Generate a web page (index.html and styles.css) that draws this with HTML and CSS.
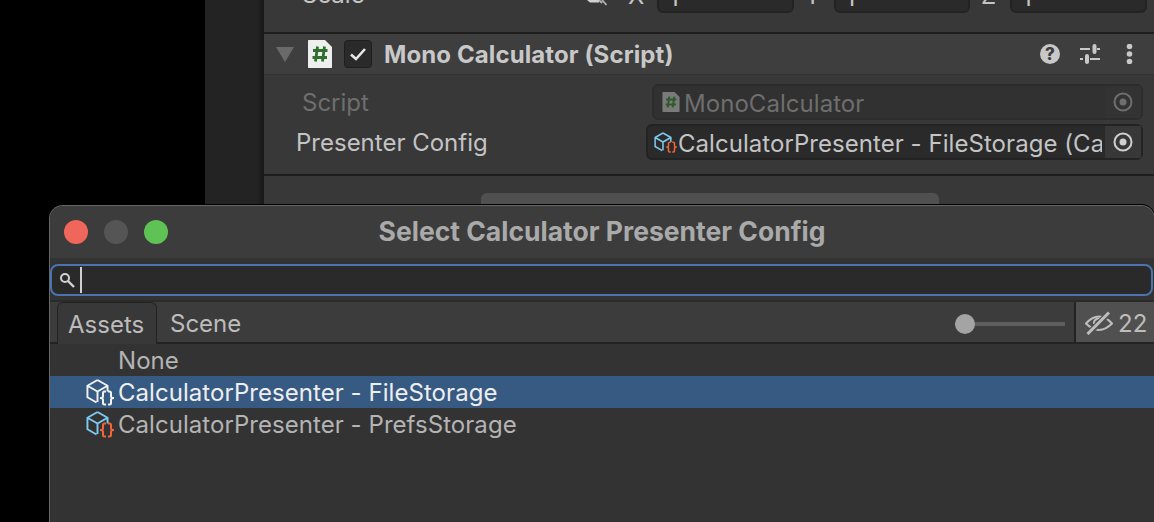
FILE: index.html
```html
<!DOCTYPE html>
<html lang="en">
<head>
    <meta charset="UTF-8">
    <title>Select Calculator Presenter Config</title>
    <link rel="stylesheet" href="styles.css">
</head>
<body>
    <svg class="defs" width="0" height="0">
        <symbol id="cube" viewBox="0 0 24 26">
            <path d="M12 1 22.500 7V13M12 1 1.500 7V19L11 24.500M1.500 7 12 13M22.500 7 12 13M12 13V24" fill="none" stroke="currentColor" stroke-width="2" stroke-linejoin="round"/>
        </symbol>
        <symbol id="braces" viewBox="0 0 14 16">
            <path d="M6 1.500H4.500C3.500 1.500 3 2 3 3V6.500C3 7.500 2.500 8 0 8 2.500 8 3 8.500 3 9.500V13C3 14 3.500 14.500 4.500 14.500H6M8 1.500H9.500C10.500 1.500 11 2 11 3V6.500C11 7.500 11.500 8 14 8 11.500 8 11 8.500 11 9.500V13C11 14 10.500 14.500 9.500 14.500H8M0 8H3M11 8H14" fill="none" stroke="currentColor" stroke-width="2"/>
        </symbol>
        <symbol id="target" viewBox="0 0 20 20">
            <circle cx="10" cy="10" r="8.500" fill="none" stroke="currentColor" stroke-width="2"/>
            <circle cx="10" cy="10" r="3.500" fill="currentColor"/>
        </symbol>
        <symbol id="script-doc" viewBox="0 0 24 28">
            <path d="M0 1C0 .4.400 0 1 0H17L24 7V27C24 27.600 23.600 28 23 28H1C.4 28 0 27.600 0 27Z" fill="currentColor"/>
            <path d="M9.500 6.500 7.500 21.500M16.500 6.500 14.500 21.500M5 10.500H19.500M4.500 17.500H19" fill="none" stroke="var(--hash)" stroke-width="2.800"/>
        </symbol>
    </svg>

    <div class="desk">
        <div class="side"></div>
        <main class="inspector">
            <div class="scale-row">
                <span class="scale-label">Scale</span>
                <svg class="link-icon" viewBox="0 0 24 20" width="24" height="20"><path d="M3 0H15V2.500H6Z" fill="#d0d0d0"/><path d="M15 0 18 3M18 0 22.500 5" fill="none" stroke="#b4b4b4" stroke-width="1.800"/></svg>
                <div class="axis"><span class="axis-name">X</span><span class="axis-input">1</span></div>
                <div class="axis"><span class="axis-name">Y</span><span class="axis-input">1</span></div>
                <div class="axis"><span class="axis-name">Z</span><span class="axis-input">1</span></div>
            </div>

            <div class="comp-header">
                <span class="foldout"></span>
                <svg class="comp-script" width="24" height="28"><use href="#script-doc"/></svg>
                <span class="enable-box">
                    <svg viewBox="0 0 20 20" width="20" height="20"><path d="M3 10.500 8 15 17 5" fill="none" stroke="#e6e6e6" stroke-width="2.600"/></svg>
                </span>
                <span class="comp-title">Mono Calculator (Script)</span>
                <div class="comp-tools">
                    <span class="help-icon">?</span>
                    <svg viewBox="0 0 20 20" width="20" height="20">
                        <path d="M0 5H10M17 5H20M0 15H3M10 15H20" stroke="#c8c8c8" stroke-width="2"/>
                        <path d="M14.500 2V8M7 12V18" stroke="#c8c8c8" stroke-width="4" stroke-linecap="round"/>
                    </svg>
                    <svg viewBox="0 0 20 20" width="20" height="20">
                        <circle cx="9.500" cy="2.500" r="2.800" fill="#c8c8c8"/><circle cx="9.500" cy="10" r="2.800" fill="#c8c8c8"/><circle cx="9.500" cy="17.500" r="2.800" fill="#c8c8c8"/>
                    </svg>
                </div>
            </div>

            <div class="comp-body">
                <div class="prop-row is-disabled">
                    <label class="prop-label">Script</label>
                    <div class="object-field">
                        <svg class="field-script" width="18" height="20"><use href="#script-doc"/></svg>
                        <span class="object-name">MonoCalculator</span>
                        <span class="object-pick"><svg width="20" height="20"><use href="#target"/></svg></span>
                    </div>
                </div>
                <div class="prop-row">
                    <label class="prop-label">Presenter Config</label>
                    <div class="object-field">
                        <span class="so-icon so-small">
                            <svg class="so-cube" width="18" height="20"><use href="#cube"/></svg>
                            <svg class="so-braces" width="11" height="12"><use href="#braces"/></svg>
                        </span>
                        <span class="object-name">CalculatorPresenter - FileStorage (Calculator Presenter Config)</span>
                        <span class="object-pick"><svg width="20" height="20"><use href="#target"/></svg></span>
                    </div>
                </div>
            </div>

            <div class="below">
                <div class="add-button"></div>
            </div>
        </main>
    </div>

    <section class="picker">
        <header class="titlebar">
            <div class="lights">
                <span class="light light-close"></span>
                <span class="light light-min"></span>
                <span class="light light-max"></span>
            </div>
            <h1 class="title">Select Calculator Presenter Config</h1>
        </header>

        <div class="search">
            <svg viewBox="0 0 16 16" width="16" height="16"><circle cx="6" cy="6" r="4" fill="none" stroke="#d2d2d2" stroke-width="2"/><path d="M9 9 15 15" stroke="#d2d2d2" stroke-width="2.400"/></svg>
            <span class="caret"></span>
        </div>

        <div class="tabbar">
            <span class="tab tab-active">Assets</span>
            <span class="tab">Scene</span>
            <div class="slider"><span class="slider-knob"></span></div>
            <div class="hidden-count">
                <svg viewBox="0 0 28 24" width="28" height="24">
                    <path d="M1 12.500C5 8 9 5.500 14 5.500S23 8 27 12.500C23 16.500 19 19 14 19S5 16.500 1 12.500Z" fill="none" stroke="#bdbdbd" stroke-width="2"/>
                    <path d="M9 13A5 5 0 0 1 18 9.500" fill="none" stroke="#bdbdbd" stroke-width="2"/>
                    <path d="M3 23 24 2" stroke="#505050" stroke-width="6"/>
                    <path d="M2.500 23 24 1.500" stroke="#bdbdbd" stroke-width="3"/>
                </svg>
                <span>22</span>
            </div>
        </div>

        <ul class="results">
            <li class="result"><span class="result-name">None</span></li>
            <li class="result is-selected">
                <span class="so-icon is-white">
                    <svg class="so-cube" width="23" height="25"><use href="#cube"/></svg>
                    <svg class="so-braces" width="14" height="16"><use href="#braces"/></svg>
                </span>
                <span class="result-name">CalculatorPresenter - FileStorage</span>
            </li>
            <li class="result">
                <span class="so-icon">
                    <svg class="so-cube" width="23" height="25"><use href="#cube"/></svg>
                    <svg class="so-braces" width="14" height="16"><use href="#braces"/></svg>
                </span>
                <span class="result-name">CalculatorPresenter - PrefsStorage</span>
            </li>
        </ul>
    </section>
</body>
</html>
```

FILE: styles.css
```css
* {
    box-sizing: border-box;
}
html, body {
    height: 100%;
}
body {
    margin: 0;
    background: #000;
    overflow: hidden;
    font-family: Inter, "Liberation Sans", sans-serif;
    font-size: 24px;
    color: #c4c4c4;
}
.defs {
    position: absolute;
}

/* inspector behind the picker */
.desk {
    display: flex;
    height: 100%;
    padding-left: 205px;
}
.side {
    width: 59px;
    background: linear-gradient(to right, #232323 88%, #181818);
}
.inspector {
    flex: 1;
    min-width: 0;
    background: #383838;
    display: flex;
    flex-direction: column;
}
.scale-row {
    height: 34px;
    padding-left: 38px;
    display: flex;
    overflow: hidden;
    border-bottom: 2px solid #1e1e1e;
}
.scale-label {
    margin-top: -20px;
    width: 282px;
}
.link-icon {
    margin-right: 11px;
    flex: none;
}
.axis {
    display: flex;
    width: 176.500px;
    flex: none;
    margin-top: -19px;
    height: 32px;
}
.axis-name {
    width: 38px;
    padding-left: 9px;
}
.axis-input {
    flex: 1;
    background: #2a2a2a;
    border: 2px solid #232323;
    border-radius: 6px;
    padding-left: 10px;
    margin-right: 2px;
}
.comp-header {
    height: 41px;
    background: #3e3e3e;
    border-bottom: 1px solid #333;
    display: flex;
    align-items: center;
    padding: 0 14px 0 12px;
}
.foldout {
    width: 0;
    height: 0;
    border-left: 9px solid transparent;
    border-right: 9px solid transparent;
    border-top: 15px solid #6a6a6a;
    margin-right: 14px;
}
.comp-script {
    color: #eeeeee;
    --hash: #2f6e2b;
    margin-right: 12px;
}
.enable-box {
    width: 28px;
    height: 28px;
    background: #2a2a2a;
    border: 1px solid #1e1e1e;
    border-radius: 4px;
    display: flex;
    align-items: center;
    justify-content: center;
    margin-right: 12px;
}
.comp-title {
    font-weight: 700;
    letter-spacing: 0.1px;
    color: #c8c8c8;
    white-space: nowrap;
}
.comp-tools {
    margin-left: auto;
    display: flex;
    align-items: center;
    gap: 20px;
}
.help-icon {
    width: 20px;
    height: 20px;
    border-radius: 50%;
    background: #c8c8c8;
    color: #3e3e3e;
    font-size: 17px;
    font-weight: 800;
    line-height: 20px;
    text-align: center;
}
.comp-body {
    height: 101px;
    padding: 9px 11px 0 32px;
    border-bottom: 2px solid #1e1e1e;
    display: flex;
    flex-direction: column;
    gap: 4px;
}
.prop-row {
    display: flex;
    height: 36px;
    align-items: center;
}
.prop-label {
    width: 350px;
    flex: none;
}
.object-field {
    flex: 1;
    min-width: 0;
    height: 36px;
    background: #2a2a2a;
    border: 2px solid #232323;
    border-radius: 6px;
    display: flex;
    align-items: center;
    padding-left: 6px;
}
.object-name {
    flex: 1;
    min-width: 0;
    overflow: hidden;
    white-space: nowrap;
    padding: 2px 0 0 1px;
    margin-right: 3px;
    letter-spacing: 0.05px;
}
.object-pick {
    width: 36px;
    height: 32px;
    flex: none;
    background: #383838;
    color: #d0d0d0;
    display: flex;
    align-items: center;
    justify-content: center;
}
.is-disabled {
    color: #6e6e6e;
}
.is-disabled .prop-label {
    padding-left: 6px;
}
.is-disabled .object-field {
    margin-left: 6px;
    background: #313131;
    border-color: #2c2c2c;
}
.is-disabled .object-pick {
    background: #333;
    color: #6e6e6e;
}
.field-script {
    color: #7a7a7a;
    --hash: #2f5a2b;
    margin: 0 3px 0 2px;
    flex: none;
}
.below {
    flex: 1;
    padding-top: 17px;
    display: flex;
    justify-content: flex-start;
}
.add-button {
    width: 458px;
    height: 40px;
    margin-left: 217px;
    background: #505050;
    border-radius: 6px;
}

/* scriptable object icon */
.so-icon {
    position: relative;
    width: 28px;
    height: 28px;
    flex: none;
    color: #7ecbf2;
    display: block;
}
.so-cube {
    position: absolute;
    left: 1px;
    top: 1px;
}
.so-braces {
    position: absolute;
    right: -1px;
    bottom: 0;
    color: #f0663a;
}
.so-small {
    width: 23px;
    height: 26px;
}
.so-small .so-cube {
    left: 0;
    top: 3px;
}
.so-small .so-braces {
    right: 0;
    bottom: 2px;
}
.is-white, .is-white .so-braces {
    color: #f2f2f2;
}

/* picker window */
.picker {
    position: absolute;
    left: 49px;
    top: 205px;
    width: 1106px;
    height: 330px;
    background: #333;
    border: 1px solid #666;
    border-bottom: 0;
    border-radius: 14px 14px 0 0;
    box-shadow: 0 0 0 1px #000;
    overflow: hidden;
}
.titlebar {
    height: 52px;
    background: #3c3c3c;
    position: relative;
    display: flex;
    align-items: center;
    justify-content: center;
}
.lights {
    position: absolute;
    left: 14px;
    top: 14px;
    display: flex;
    gap: 16px;
}
.light {
    width: 24px;
    height: 24px;
    border-radius: 50%;
}
.light-close { background: #f0665a; }
.light-min { background: #555; }
.light-max { background: #5ec354; }
.title {
    margin: -3px 0 0;
    font-size: 26.500px;
    font-weight: 700;
    color: #aaaaaa;
}
.search {
    height: 32px;
    margin: 6px 1px 4px 0;
    background: #2a2a2a;
    border: 2px solid #4a74b0;
    border-radius: 8px;
    display: flex;
    align-items: center;
    padding-left: 7px;
}
.caret {
    width: 2px;
    height: 26px;
    background: #d0d0d0;
    margin-left: 5px;
}
.tabbar {
    height: 44px;
    background: #3c3c3c;
    border-top: 2px solid #2b2b2b;
    border-bottom: 2px solid #232323;
    display: flex;
    align-items: stretch;
    padding-left: 7px;
}
.tab {
    padding: 2px 0 0 13px;
    width: 100px;
    display: flex;
    align-items: center;
    color: #bcbcbc;
}
.tab-active {
    padding-left: 10px;
    background: #383838;
    border: 1px solid #232323;
    border-bottom: 0;
    border-radius: 6px 6px 0 0;
    margin-bottom: -2px;
}
.slider {
    margin-left: auto;
    width: 110px;
    margin-right: 9px;
    padding-top: 4px;
    position: relative;
    display: flex;
    align-items: center;
}
.slider::before {
    content: "";
    width: 100%;
    height: 4px;
    background: #5e5e5e;
}
.slider-knob {
    position: absolute;
    left: 0;
    top: 12px;
    width: 20px;
    height: 20px;
    border-radius: 50%;
    background: #a4a4a4;
}
.hidden-count {
    width: 80px;
    background: #505050;
    border-left: 2px solid #232323;
    display: flex;
    align-items: center;
    gap: 5px;
    padding: 2px 0 0 9px;
    color: #bdbdbd;
}
.results {
    list-style: none;
    margin: 0;
    padding: 0;
}
.result {
    height: 32px;
    display: flex;
    align-items: center;
    padding-left: 35px;
    color: #b4b4b4;
}
.result-name {
    white-space: nowrap;
    letter-spacing: 0.05px;
}
.result:first-child .result-name {
    margin-left: 33px;
}
.is-selected {
    background: #375a82;
    color: #eeeeee;
}
.so-icon + .result-name {
    margin-left: 5px;
}
```
